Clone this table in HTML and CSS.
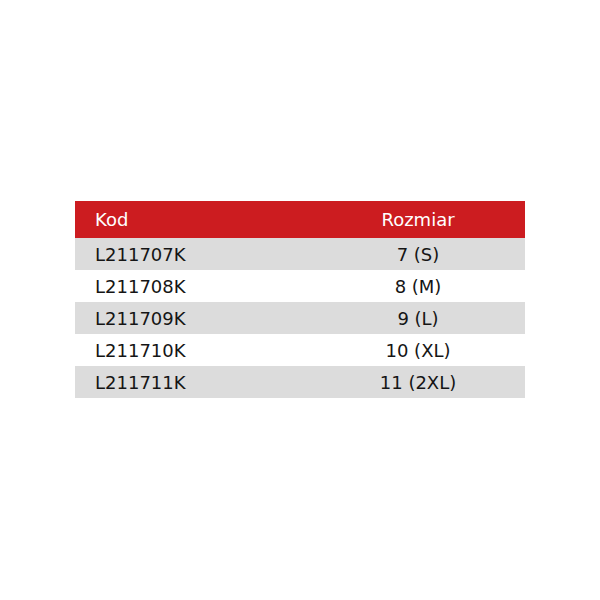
FILE: index.html
```html
<!DOCTYPE html>
<html lang="pl">
<head>
<meta charset="utf-8">
<link rel="stylesheet" href="styles.css">
</head>
<body>
<div class="page">
  <table class="sizes">
    <thead>
      <tr><th class="code">Kod</th><th class="size">Rozmiar</th></tr>
    </thead>
    <tbody>
      <tr class="alt"><td class="code">L211707K</td><td class="size">7 (S)</td></tr>
      <tr><td class="code">L211708K</td><td class="size">8 (M)</td></tr>
      <tr class="alt"><td class="code">L211709K</td><td class="size">9 (L)</td></tr>
      <tr><td class="code">L211710K</td><td class="size">10 (XL)</td></tr>
      <tr class="alt"><td class="code">L211711K</td><td class="size">11 (2XL)</td></tr>
    </tbody>
  </table>
</div>
</body>
</html>
```
FILE: styles.css
```css
html, body {
  margin: 0;
  padding: 0;
  background: #ffffff;
}
.page {
  width: 600px;
  height: 600px;
  display: flex;
  align-items: flex-start;
  justify-content: center;
  padding-top: 201px;
  box-sizing: border-box;
}
.sizes {
  width: 450px;
  border-collapse: collapse;
  table-layout: fixed;
  font-family: "DejaVu Sans", Verdana, sans-serif;
  font-size: 18px;
  color: #151515;
}
.sizes th {
  background: #cc1c20;
  color: #ffffff;
  font-weight: normal;
  height: 37px;
  padding: 0;
}
.sizes td {
  height: 32px;
  padding: 0;
}
.sizes .code {
  width: 216px;
  text-align: left;
  padding-left: 20px;
}
.sizes .size {
  text-align: center;
}
.sizes tr.alt td {
  background: #dcdcdc;
}
```
